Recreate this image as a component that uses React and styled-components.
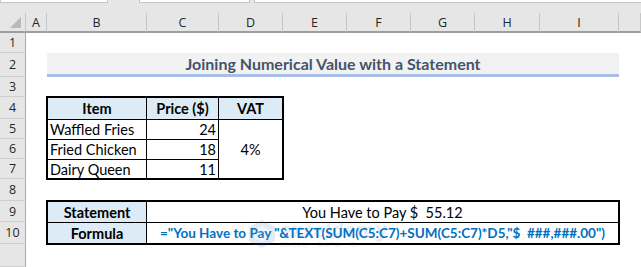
import React from 'react';
import styled, { createGlobalStyle } from 'styled-components';

const GlobalStyle = createGlobalStyle`
	html, body {
		margin: 0;
		padding: 0;
		background: #ffffff;
		overflow: hidden;
	}
`;

const COLUMNS = ['A', 'B', 'C', 'D', 'E', 'F', 'G', 'H', 'I', ''];
const ROWS = ['1', '2', '3', '4', '5', '6', '7', '8', '9', '10', ''];

const items = [
	{ name: 'Waffled Fries', price: 24 },
	{ name: 'Fried Chicken', price: 18 },
	{ name: 'Dairy Queen', price: 11 },
];

const App = () => {
	return (
		<Window>
			<GlobalStyle />
			<TabStrip>
				<Tab $width={106} />
				<Tab $width={109} $gap={31} />
				<Tab $width={391} $gap={4} />
			</TabStrip>
			<Sheet>
				<Corner>
					<CornerMark />
				</Corner>
				{COLUMNS.map((col, i) => (
					<ColHead key={'c' + i} $col={i + 2}>{col}</ColHead>
				))}
				{ROWS.map((row, i) => (
					<RowHead key={'r' + i} $row={i + 2}>{row}</RowHead>
				))}

				<Title>Joining Numerical Value with a Statement</Title>

				<ItemTable>
					<HeadCell>Item</HeadCell>
					<HeadCell>Price ($)</HeadCell>
					<HeadCell $last>VAT</HeadCell>
					{items.map((item, i) => (
						<React.Fragment key={item.name}>
							<TextCell $lastRow={i === items.length - 1}>{item.name}</TextCell>
							<NumCell $lastRow={i === items.length - 1}>{item.price}</NumCell>
						</React.Fragment>
					))}
					<VatCell>4%</VatCell>
				</ItemTable>

				<SummaryTable>
					<HeadCell>Statement</HeadCell>
					<ValueCell $last>You Have to Pay $  55.12</ValueCell>
					<HeadCell $lastRow>Formula</HeadCell>
					<FormulaCell>="You Have to Pay "&amp;TEXT(SUM(C5:C7)+SUM(C5:C7)*D5,"$  ###,###.00")</FormulaCell>
				</SummaryTable>

				<Watermark>
					<svg width="28" height="30" viewBox="0 0 28 30">
						<polygon points="14,1 27,8 27,22 14,29 1,22 1,8" fill="#3c7fc9" />
						<polygon points="14,7 21,11 21,19 14,23 7,19 7,11" fill="#9cc2ec" />
					</svg>
					<MarkText>
						<MarkName>exceldemy</MarkName>
						<MarkTag>EXCEL · DATA · BI</MarkTag>
					</MarkText>
				</Watermark>
			</Sheet>
		</Window>
	);
};

const Window = styled.div`
	width: 641px;
	height: 267px;
	display: flex;
	flex-direction: column;
	overflow: hidden;
	background: #ffffff;
`;

const TabStrip = styled.div`
	height: 13px;
	flex: none;
	display: flex;
	align-items: flex-start;
	background: #e6e6e6;
`;

const Tab = styled.div`
	width: ${props => props.$width}px;
	margin-left: ${props => props.$gap || 0}px;
	height: 2px;
	background: #ffffff;
	border: 1px solid #c6c6c6;
	border-top: none;
	flex: none;
`;

const Sheet = styled.div`
	position: relative;
	flex: 1;
	display: grid;
	grid-template-columns: 26px 21px 100px 72px 64px 64px 64px 64px 65px 79px 1fr;
	grid-template-rows: 20px 20px 24px 20px 22px 20px 20px 20px 22px 21px 22px 1fr;
	font-family: Lato, "Liberation Sans", sans-serif;
`;

const Corner = styled.div`
	grid-column: 1;
	grid-row: 1;
	position: relative;
	background: #e6e6e6;
	border-right: 1px solid #c6c6c6;
	border-bottom: 2px solid #9e9e9e;
`;

const CornerMark = styled.div`
	position: absolute;
	right: 4px;
	bottom: 3px;
	width: 0;
	height: 0;
	border-left: 11px solid transparent;
	border-bottom: 11px solid #b9b9b9;
`;

const ColHead = styled.div`
	grid-column: ${props => props.$col};
	grid-row: 1;
	display: flex;
	align-items: center;
	justify-content: center;
	background: #e6e6e6;
	border-right: 1px solid #c6c6c6;
	border-bottom: 2px solid #9e9e9e;
	font-family: "Open Sans", "Noto Sans", sans-serif;
	font-size: 12.5px;
	color: #262626;
`;

const RowHead = styled.div`
	grid-column: 1;
	grid-row: ${props => props.$row};
	display: flex;
	align-items: center;
	justify-content: center;
	background: #e6e6e6;
	border-right: 1px solid #a9a9a9;
	border-bottom: 1px solid #cfcfcf;
	font-family: "Open Sans", "Noto Sans", sans-serif;
	font-size: 12.5px;
	color: #262626;
`;

const Title = styled.div`
	grid-column: 3 / 11;
	grid-row: 3;
	display: flex;
	align-items: center;
	justify-content: center;
	background: #f2f2f2;
	border-bottom: 3px solid #a9bee4;
	font-weight: 700;
	font-size: 16px;
	color: #44546a;
`;

const Bordered = styled.div`
	box-sizing: border-box;
	margin: -1px;
	border: 2px solid #000000;
	display: grid;
	font-size: 14.5px;
	color: #000000;
	background: #ffffff;
`;

const ItemTable = styled(Bordered)`
	grid-column: 3 / 6;
	grid-row: 5 / 9;
	grid-template-columns: 99px 72px 1fr;
	grid-template-rows: 22px 20px 20px 1fr;
`;

const SummaryTable = styled(Bordered)`
	grid-column: 3 / 11;
	grid-row: 10 / 12;
	grid-template-columns: 99px 1fr;
	grid-template-rows: 21px 1fr;
`;

const Cell = styled.div`
	display: flex;
	align-items: center;
	white-space: pre;
	overflow: hidden;
	border-right: ${props => (props.$last ? 'none' : '1px solid #000')};
	border-bottom: ${props => (props.$lastRow ? 'none' : '1px solid #000')};
`;

const HeadCell = styled(Cell)`
	justify-content: center;
	background: #ddebf7;
	font-weight: 700;
`;

const TextCell = styled(Cell)`
	padding-left: 2px;
`;

const NumCell = styled(Cell)`
	justify-content: flex-end;
	padding-right: 2px;
`;

const VatCell = styled(Cell)`
	grid-column: 3;
	grid-row: 2 / 5;
	justify-content: center;
	border: none;
`;

const ValueCell = styled(Cell)`
	justify-content: center;
`;

const FormulaCell = styled(Cell)`
	justify-content: center;
	border: none;
	color: #0070c0;
	font-weight: 700;
	font-size: 13.5px;
`;

const Watermark = styled.div`
	position: absolute;
	left: 248px;
	top: 206px;
	display: flex;
	align-items: center;
	gap: 4px;
	opacity: 0.14;
	pointer-events: none;
`;

const MarkText = styled.div`
	display: flex;
	flex-direction: column;
	line-height: 1;
`;

const MarkName = styled.span`
	font-family: "Open Sans", sans-serif;
	font-size: 20px;
	font-weight: 700;
	color: #3c7fc9;
`;

const MarkTag = styled.span`
	font-family: "Open Sans", sans-serif;
	font-size: 8px;
	letter-spacing: 1px;
	color: #5a6b80;
`;

export default App;
